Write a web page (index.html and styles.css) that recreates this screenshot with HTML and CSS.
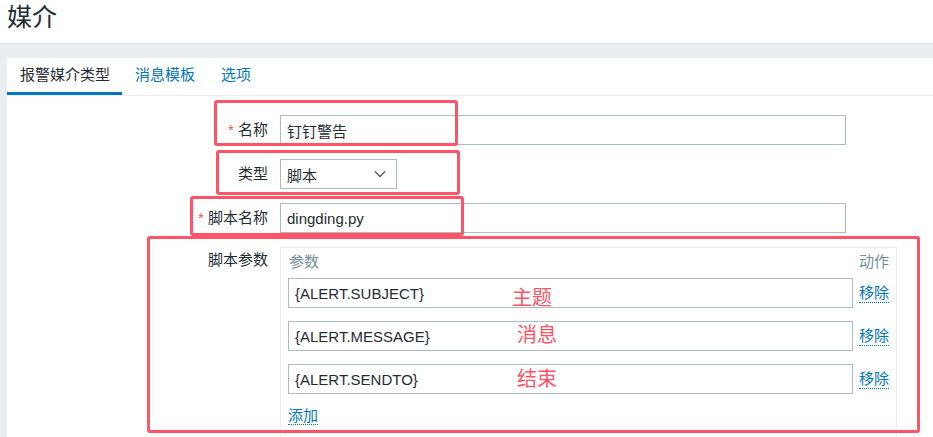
FILE: index.html
```html
<!DOCTYPE html>
<html lang="zh">
<head>
<meta charset="utf-8">
<title>媒介</title>
<link rel="stylesheet" href="styles.css">
</head>
<body>
<header class="page-header">
  <h1 class="page-title">媒介</h1>
</header>
<main class="page-body">
  <section class="card">
    <nav class="tabs">
      <a class="tab tab-active">报警媒介类型</a>
      <a class="tab">消息模板</a>
      <a class="tab">选项</a>
    </nav>
    <form class="form">
      <label class="form-label"><span class="req">*</span> 名称</label>
      <div class="form-field"><input class="text-input wide" type="text" value="钉钉警告"></div>

      <label class="form-label">类型</label>
      <div class="form-field">
        <div class="select">
          <span>脚本</span>
          <svg class="chevron" width="12" height="8" viewBox="0 0 12 8"><path d="M1 1.5 L6 6.5 L11 1.5" fill="none" stroke="#555" stroke-width="1.3"/></svg>
        </div>
      </div>

      <label class="form-label"><span class="req">*</span> 脚本名称</label>
      <div class="form-field"><input class="text-input wide" type="text" value="dingding.py"></div>

      <label class="form-label form-label-top">脚本参数</label>
      <div class="form-field">
        <div class="params">
          <div class="params-head"><span>参数</span><span>动作</span></div>
          <div class="param-row">
            <input class="text-input param-input" type="text" value="{ALERT.SUBJECT}">
            <a class="link">移除</a>
          </div>
          <div class="param-row">
            <input class="text-input param-input" type="text" value="{ALERT.MESSAGE}">
            <a class="link">移除</a>
          </div>
          <div class="param-row">
            <input class="text-input param-input" type="text" value="{ALERT.SENDTO}">
            <a class="link">移除</a>
          </div>
          <div class="add-row"><a class="link">添加</a></div>
        </div>
      </div>
    </form>
  </section>
</main>

<div class="mark mark-1"></div>
<div class="mark mark-2"></div>
<div class="mark mark-3"></div>
<div class="mark mark-4"></div>
<span class="note note-1">主题</span>
<span class="note note-2">消息</span>
<span class="note note-3">结束</span>
</body>
</html>
```
FILE: styles.css
```css
* { box-sizing: border-box; }
html, body {
  margin: 0;
  padding: 0;
}
body {
  position: relative;
  background: #ebeef0;
  font-family: "Liberation Sans", "Noto Sans CJK SC", sans-serif;
  font-size: 15px;
  color: #1f2c33;
  width: 933px;
  height: 437px;
  overflow: hidden;
}
.page-header {
  background: #fff;
  height: 44px;
  border-bottom: 1px solid #dfe4e7;
  padding: 2px 0 0 7px;
}
.page-title {
  margin: 0;
  font-weight: normal;
  font-size: 25px;
  line-height: 30px;
  color: #1f2c33;
}
.page-body {
  padding: 14px 0 0 7px;
}
.card {
  background: #fff;
  height: 400px;
}
.tabs {
  display: flex;
  height: 38px;
  border-bottom: 1px solid #ebeef0;
}
.tab {
  padding: 0 13px;
  line-height: 34px;
  color: #0275b8;
  border-bottom: 3px solid transparent;
  height: 37px;
}
.tab-active {
  color: #1f2c33;
  border-bottom-color: #0275b8;
  padding: 0 12px 0 13px;
}
.form {
  display: grid;
  grid-template-columns: 261px 617px;
  column-gap: 12px;
  row-gap: 14px;
  padding-top: 19px;
}
.form-label {
  text-align: right;
  align-self: center;
  line-height: 18px;
  white-space: nowrap;
}
.form-label-top {
  align-self: start;
  padding-top: 4px;
}
.req {
  color: #e45959;
}
.text-input {
  height: 30px;
  border: 1px solid #acbbc2;
  padding: 0 6px;
  font: inherit;
  font-size: 15px;
  color: #1f2c33;
  background: #fff;
  outline: none;
}
.wide {
  width: 566px;
}
.select {
  width: 117px;
  height: 30px;
  border: 1px solid #acbbc2;
  display: flex;
  align-items: center;
  justify-content: space-between;
  padding: 0 10px 0 6px;
}
.chevron { display: block; }
.params {
  width: 617px;
  height: 200px;
  border: 1px solid #ebeef0;
  border-bottom: none;
  padding: 5px 7px 0 7px;
}
.params-head {
  display: flex;
  justify-content: space-between;
  color: #768d99;
  line-height: 18px;
  padding-left: 1px;
  margin-bottom: 7px;
}
.param-row {
  display: flex;
  align-items: center;
  gap: 6px;
  margin-bottom: 13px;
}
.param-input {
  flex: 1;
}
.link {
  color: #0275b8;
  border-bottom: 1px dotted #0275b8;
  line-height: 18px;
  cursor: pointer;
}
.add-row {
  line-height: 18px;
  padding-top: 0;
}

.mark {
  position: absolute;
  border: 3px solid #fd5468;
  border-radius: 3px;
}
.mark-1 { left: 214px; top: 100px; width: 244px; height: 46px; }
.mark-2 { left: 216px; top: 150px; width: 244px; height: 45px; }
.mark-3 { left: 190px; top: 196px; width: 274px; height: 40px; }
.mark-4 { left: 147px; top: 236px; width: 773px; height: 197px; }
.note {
  position: absolute;
  color: #fd5468;
  font-family: "Noto Sans CJK SC", sans-serif;
  font-size: 20px;
  line-height: 24px;
}
.note-1 { left: 512px; top: 285px; }
.note-2 { left: 517px; top: 322px; }
.note-3 { left: 517px; top: 366px; }
```
